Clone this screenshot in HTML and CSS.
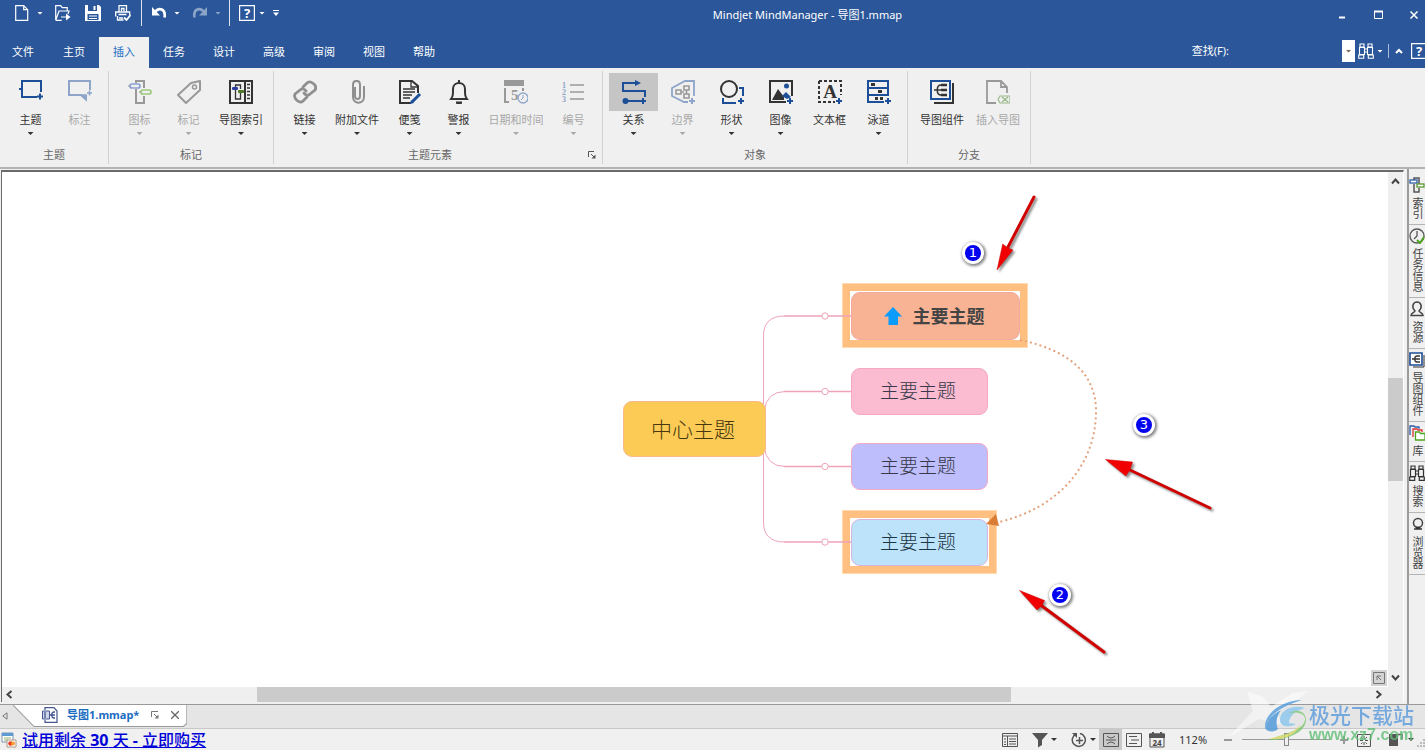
FILE: index.html
```html
<!DOCTYPE html>
<html lang="zh-CN">
<head>
<meta charset="utf-8">
<title>Mindjet MindManager - 导图1.mmap</title>
<link rel="stylesheet" href="styles.css">
</head>
<body>
<header class="header">
  <div class="titlebar">
    <div class="quick">
      <button class="qbtn" aria-label="新建"><svg viewBox="0 0 16 16"><path d="M1.700 .7h8l4 4v10.600h-12zM9.700 .7v4h4" fill="none" stroke="#fff" stroke-width="1.200"/></svg></button>
      <button class="drop g7" aria-label="新建选项"></button>
      <button class="qbtn g12" aria-label="打开"><svg viewBox="0 0 16 16"><path d="M.7 15.300V.7h5l1.500 2h5v3M.7 15.300 4 6h10l-1 3M.7 15.300h6M6 12h6" fill="none" stroke="#fff" stroke-width="1.200"/><path d="M11 8.500 15.500 12 11 15.500z" fill="#fff"/></svg></button>
      <button class="qbtn g14" aria-label="保存"><svg viewBox="0 0 16 16"><path d="M0 0h14l2 2v14H0z" fill="#fff"/><path d="M3 0h9v6H3zM2.500 9h11v6h-11z" fill="#2b579a"/><path d="M8.500 1h2v4h-2zM4 10.500h8v1H4zM4 13h8v1H4z" fill="#fff"/></svg></button>
      <button class="qbtn g14" aria-label="打印"><svg viewBox="0 0 16 16"><path d="M4 6.500V.7h7.500v5.800M.7 11.500V7h14v3M2.500 11v4h6M4 13h4M6.500 6V3.500h2.500v2.500M3.500 9.500h8" fill="none" stroke="#fff" stroke-width="1.300"/><path d="m9 12.500 2.500 2.500 4-5" fill="none" stroke="#fff" stroke-width="1.800"/></svg></button>
      <span class="qsep g10"></span>
      <button class="qbtn g9" aria-label="撤消"><svg viewBox="0 0 16 16"><path d="M3.500 7.500C8 1.500 15 4 13.500 12.500" fill="none" stroke="#fff" stroke-width="2.600"/><path d="M1 2v8.500h8z" fill="#fff"/></svg></button>
      <button class="drop g7" aria-label="撤消选项"></button>
      <button class="qbtn g12 faded" aria-label="重做"><svg viewBox="0 0 16 16"><path d="M12.500 7.500C8 1.500 1 4 2.500 12.500" fill="none" stroke="#fff" stroke-width="2.600"/><path d="M15 2v8.500H7z" fill="#fff"/></svg></button>
      <button class="drop g7 faded" aria-label="重做选项"></button>
      <span class="qsep g8"></span>
      <button class="qbtn g9" aria-label="帮助"><svg viewBox="0 0 16 16"><path d="M.6.6h14.800v14.800H.6z" fill="none" stroke="#fff" stroke-width="1.200"/><text x="8" y="12.500" class="q-mark">?</text></svg></button>
      <button class="drop g4" aria-label="帮助选项"></button>
      <button class="custom g8" aria-label="自定义"><svg viewBox="0 0 6 6"><path d="M0 .5h6" stroke="#fff"/><path d="M0 2.500h6L3 6z" fill="#fff"/></svg></button>
    </div>
    <h1 class="title">Mindjet MindManager - 导图1.mmap</h1>
    <div class="winbtns">
      <button aria-label="最小化"><svg viewBox="0 0 12 12"><path d="M3 8.500h6" stroke="#fff" stroke-width="2"/></svg></button>
      <button aria-label="最大化"><svg viewBox="0 0 12 12"><path d="M2.500 2.500h8v7h-8z" fill="none" stroke="#fff"/><path d="M2 2.500h9" stroke="#fff" stroke-width="2"/></svg></button>
      <button aria-label="关闭"><svg viewBox="0 0 12 12"><path d="m2.500 2.500 7 7m0-7-7 7" stroke="#fff" stroke-width="1.500"/></svg></button>
    </div>
  </div>
  <div class="menubar">
    <nav class="menu">
      <button>文件</button><button>主页</button><button class="active">插入</button><button>任务</button><button>设计</button><button>高级</button><button>审阅</button><button>视图</button><button>帮助</button>
    </nav>
    <div class="find">
      <label for="find">查找(F):</label>
      <input id="find" type="text">
      <button class="find-drop" aria-label="查找历史"><span class="drop brown"></span></button>
      <button class="qbtn g3" aria-label="查找"><svg viewBox="0 0 16 16"><path d="M2 1h4v3H2zM10 1h4v3h-4zM1.500 4.500h5v7h-5zM9.500 4.500h5v7h-5zM.7 12h5v3.300h-5zM10.300 12h5v3.300h-5zM6.500 6h3M6.500 9h3" fill="none" stroke="#fff" stroke-width="1.100"/></svg></button>
      <button class="drop g3" aria-label="查找选项"></button>
      <span class="fsep"></span>
      <button class="collapse" aria-label="折叠功能区"><svg viewBox="0 0 8 6"><path d="m1 5 3-3 3 3" fill="none" stroke="#fff" stroke-width="2"/></svg></button>
      <button class="qbtn" aria-label="帮助"><svg viewBox="0 0 16 16"><path d="M.6.6h14.800v14.800H.6z" fill="none" stroke="#fff" stroke-width="1.200"/><text x="8" y="12.500" class="q-mark">?</text></svg></button>
    </div>
  </div>
</header>

<section class="ribbon" aria-label="插入">
  <div class="group">
    <div class="tools">
      <button class="tool"><span class="pic"><svg viewBox="0 0 24 24"><path d="M18 17H3V1h19v11M0 9h3" fill="none" stroke="#1d4e98" stroke-width="2"/><path d="M18 16.500h6M21 13.500v6" stroke="#1d4e98" stroke-width="2"/></svg></span><span>主题</span><i class="caret"></i></button>
      <button class="tool off"><span class="pic"><svg viewBox="0 0 24 24"><path d="M22 10V1H1v14h12l5 4v-4" fill="none" stroke="#8ea5c9" stroke-width="2"/><path d="M13 15h5v5zM19 13h5M21.500 10.500v5" fill="#8ea5c9" stroke="#8ea5c9" stroke-width="1.500"/></svg></span><span>标注</span></button>
    </div>
    <div class="gname">主题</div>
  </div>
  <div class="group">
    <div class="tools">
      <button class="tool off"><span class="pic"><svg viewBox="0 0 24 24"><path d="M8 3V1h8v7M8 9v14h8v-7" fill="none" stroke="#999" stroke-width="2"/><rect x="2" y="4" width="10" height="4" rx="2" fill="#f0f0f0" stroke="#8a9fd0" stroke-width="1.700"/><rect x="13" y="10" width="10" height="4" rx="2" fill="#f0f0f0" stroke="#9cc97c" stroke-width="1.700"/><path d="M0 6h2M11 12h2" stroke="#999"/></svg></span><span>图标</span><i class="caret"></i></button>
      <button class="tool off"><span class="pic"><svg viewBox="0 0 24 24"><path d="m1 15 13-12 9-2v9L9 23z" fill="none" stroke="#999" stroke-width="2" stroke-linejoin="round"/><circle cx="17.500" cy="7" r="2" fill="none" stroke="#999" stroke-width="1.500"/></svg></span><span>标记</span><i class="caret"></i></button>
      <button class="tool wide"><span class="pic"><svg viewBox="0 0 24 24"><path d="M1 1h22v22H1zM16 1v22" fill="none" stroke="#333" stroke-width="2"/><path d="M6.500 7V5h5v4M6.500 10v9h5v-6" fill="none" stroke="#333" stroke-width="1.300"/><rect x="3" y="7" width="6" height="3" rx="1" fill="#2c3f9e"/><rect x="9" y="10" width="6" height="3" rx="1" fill="#4e7a27"/><path d="M18 4.500h3M18 8h3M18 11.500h3M18 15h3M18 18.500h3" stroke="#333" stroke-width="1.500"/></svg></span><span>导图索引</span><i class="caret"></i></button>
    </div>
    <div class="gname">标记</div>
  </div>
  <div class="group">
    <div class="tools">
      <button class="tool"><span class="pic"><svg viewBox="0 0 24 24"><g fill="none" stroke="#8f8f8f" stroke-width="2.800" stroke-linecap="round"><path d="m10 7 4-4c3-3 11 2 8 7l-5 4c-2 2-5 1-6-1"/><path d="m14 17-4 4c-3 3-10-2-8-7l5-4c2-2 5-1 6 1"/></g></svg></span><span>链接</span><i class="caret"></i></button>
      <button class="tool wide"><span class="pic"><svg viewBox="0 0 24 24"><path d="M10 7v9c0 4 5 4 5 0V5c0-5.500-7-5.500-7 0v12c0 7.500 11 7.500 11 0V6" fill="none" stroke="#8f8f8f" stroke-width="2"/></svg></span><span>附加文件</span><i class="caret"></i></button>
      <button class="tool"><span class="pic"><svg viewBox="0 0 24 24"><path d="M13 23H2V1h12l6 5v7" fill="none" stroke="#333" stroke-width="2"/><path d="M13 1v6h7M5 9h12M5 12h12M5 15h9M5 18h7" fill="none" stroke="#333" stroke-width="1.300"/><path d="m22 14-8 8" stroke="#1d4e98" stroke-width="3"/><path d="m13 20-1 4 4-1z" fill="#1d4e98"/></svg></span><span>便笺</span><i class="caret"></i></button>
      <button class="tool"><span class="pic"><svg viewBox="0 0 24 24"><path d="M4 19c2-3 2-4 2-10 0-8 12-8 12 0 0 6 0 7 2 10z" fill="none" stroke="#333" stroke-width="2"/><path d="M9 21.500h6v2c-1 1-5 1-6 0zM11 0h2v3h-2z" fill="#333"/></svg></span><span>警报</span><i class="caret"></i></button>
      <button class="tool date off"><span class="pic"><svg viewBox="0 0 24 24"><path d="M0 0h20v6H0z" fill="#999"/><path d="M1 8v14h4M19 8v3" fill="none" stroke="#999" stroke-width="2"/><text x="7" y="20" class="five">5</text><circle cx="19" cy="18" r="5" fill="#f0f0f0" stroke="#8ea5c9" stroke-width="1.300"/><path d="M19 15v3l-2 2" fill="none" stroke="#8ea5c9"/></svg></span><span>日期和时间</span><i class="caret"></i></button>
      <button class="tool off"><span class="pic"><svg viewBox="0 0 24 24"><path d="M8 5h14M8 12h14M8 19h14" stroke="#999" stroke-width="1.700"/><g class="digits"><text x="2" y="8">1</text><text x="2" y="15">2</text><text x="2" y="22">3</text></g></svg></span><span>编号</span><i class="caret"></i></button>
    </div>
    <div class="gname has-launcher">主题元素<button class="launcher" aria-label="主题元素选项"><svg viewBox="0 0 8 8"><path d="M.5 6V.5H6M3 3l3 3" fill="none" stroke="#555"/><path d="M7.500 3.500v4h-4z" fill="#555"/></svg></button></div>
  </div>
  <div class="group">
    <div class="tools">
      <button class="tool on"><span class="pic"><svg viewBox="0 0 24 24"><path d="M15 3H1v8h22v6M4 21h14" fill="none" stroke="#1d4e98" stroke-width="2"/><path d="m13 0 6 3-6 3z" fill="#1d4e98"/><circle cx="3.500" cy="21" r="3" fill="#1d4e98"/><path d="M18 21h6M21 18v6" stroke="#1d4e98" stroke-width="2"/></svg></span><span>关系</span><i class="caret"></i></button>
      <button class="tool off"><span class="pic"><svg viewBox="0 0 24 24"><path d="M23 16V1h-9L1 8v8l12 6h4" fill="none" stroke="#8ea5c9" stroke-width="1.800"/><path d="M5 10h5v4H5zM13 6h5v4h-5zM13 14h5v4h-5zM10 12h3M15.500 10v4" fill="none" stroke="#999" stroke-width="1.600"/><path d="M18 21h6M21 18v6" stroke="#8ea5c9" stroke-width="2"/></svg></span><span>边界</span><i class="caret"></i></button>
      <button class="tool"><span class="pic"><svg viewBox="0 0 24 24"><circle cx="9" cy="9" r="8" fill="none" stroke="#333" stroke-width="2"/><path d="M19 8h4v8M3 18v5h13M18 21h6M21 18v6" fill="none" stroke="#1d4e98" stroke-width="2"/></svg></span><span>形状</span><i class="caret"></i></button>
      <button class="tool"><span class="pic"><svg viewBox="0 0 24 24"><path d="M17 22H1V1h22v15" fill="none" stroke="#333" stroke-width="2"/><path d="m3 20 6-11 6 8v3z" fill="#333"/><path d="m13 16 4-4 5 5-4 2z" fill="#1d4e98"/><circle cx="17.500" cy="6" r="2.500" fill="#1d4e98"/><path d="M18 21h6M21 18v6" stroke="#1d4e98" stroke-width="2"/></svg></span><span>图像</span><i class="caret"></i></button>
      <button class="tool"><span class="pic"><svg viewBox="0 0 24 24"><path d="M1 1h22v14M1 1v21h16" fill="none" stroke="#333" stroke-width="2" stroke-dasharray="3 2"/><text x="12" y="18" class="big-a">A</text><path d="M18 21h6M21 18v6" stroke="#1d4e98" stroke-width="2"/></svg></span><span>文本框</span></button>
      <button class="tool"><span class="pic"><svg viewBox="0 0 24 24"><path d="M17 22H1V1h20v15M1 8h20M1 15h20" fill="none" stroke="#1d4e98" stroke-width="2"/><path d="M4 3h4v3H4zM11 10h4v3h-4zM8 17h3v3H8zM13 17h3v3h-3z" fill="#333"/><path d="M18 21h6M21 18v6" stroke="#1d4e98" stroke-width="2"/></svg></span><span>泳道</span><i class="caret"></i></button>
    </div>
    <div class="gname">对象</div>
  </div>
  <div class="group">
    <div class="tools">
      <button class="tool wide"><span class="pic"><svg viewBox="0 0 24 24"><path d="M23 3v20H4" fill="none" stroke="#333" stroke-width="2"/><path d="M1 1h19v18H1z" fill="#f0f0f0" stroke="#1d4e98" stroke-width="2"/><path d="M11 5c-5 0-5 10 0 10M4 10h8" fill="none" stroke="#333" stroke-width="1.500"/><path d="M11 5h6M11 10h6M11 15h6" stroke="#333" stroke-width="2.500"/></svg></span><span>导图组件</span></button>
      <button class="tool wide off"><span class="pic"><svg viewBox="0 0 24 24"><path d="M10 23H1V1h14l6 6v6M15 1v6h6" fill="none" stroke="#999" stroke-width="1.800"/><path d="M14 16h10v7H14l-2-3.500zM16 17l6 5M22 17l-6 5" fill="none" stroke="#9bb98a" stroke-width="1.200"/></svg></span><span>插入导图</span></button>
    </div>
    <div class="gname">分支</div>
  </div>
</section>

<main class="work">
  <div class="doc">
    <div class="doc-row">
      <div class="canvas">
        <div class="frame f1"></div>
        <div class="frame f4"></div>
        <svg class="layer" viewBox="2 172 1386 515" width="1386" height="515">
          <g fill="none" stroke="#eda3b8">
            <path d="M763.500 405v-69q0-20 21-20M763.500 453v69q0 20 21 20"/>
            <path d="M764 411q3-19.500 21-19.500M764 447q3 19.500 21 19.500"/>
            <path d="M784 316h67M784 391.500h67M784 466.500h67M784 542h67" stroke-width="1.600"/>
          </g>
          <g fill="#fff" stroke="#eda3b8"><circle cx="825" cy="316" r="3.200"/><circle cx="825" cy="391.500" r="3.200"/><circle cx="825" cy="466.500" r="3.200"/><circle cx="825" cy="542" r="3.200"/></g>
        </svg>
        <div class="node center">中心主题</div>
        <div class="node n1"><svg viewBox="0 0 18 18"><path d="M9 0 18 9.500h-4V18H4.500V9.500H0z" fill="#0a9bfb"/></svg>主要主题</div>
        <div class="node n2">主要主题</div>
        <div class="node n3">主要主题</div>
        <div class="node n4">主要主题</div>
        <svg class="layer" viewBox="2 172 1386 515" width="1386" height="515">
          <path d="M1020 340C1068 350 1096 373 1096 411 1096 462 1062 507 999 522" fill="none" stroke="#e3a27c" stroke-width="2" stroke-dasharray="2 3"/>
          <path d="m986 524 10-10 3 12z" fill="#d97c35"/>
          <g class="arrows" fill="#f00000" stroke="#d00000">
            <path d="m1034 197-27 52M1210 508l-80-38M1104 652l-62-46" stroke-width="3" stroke-linecap="round"/>
            <path d="m997 270 5.700-26 5 4 5.300 2zM1105.500 459.500l27 2.500-2.700 8-4 6zM1019.500 590.500l25 10-3 5.500-4.500 4z" stroke-width=".5"/>
          </g>
        </svg>
        <span class="mark m1">1</span>
        <span class="mark m2">2</span>
        <span class="mark m3">3</span>
        <button class="corner" aria-label="全景"><svg viewBox="0 0 16 16"><path d="M2.500 2.500h11v11h-11zM6 10V6h4M6 6l4 4" fill="none" stroke="#777"/></svg></button>
      </div>
      <div class="vbar">
        <button aria-label="向上"><svg viewBox="0 0 9 9"><path d="m1 6.500 3.500-4 3.500 4" fill="none" stroke="#444" stroke-width="2"/></svg></button>
        <div class="vtrack"><div class="vthumb"></div></div>
        <button aria-label="向下"><svg viewBox="0 0 9 9"><path d="m1 2.500 3.500 4 3.500-4" fill="none" stroke="#444" stroke-width="2"/></svg></button>
      </div>
    </div>
    <div class="hbar">
      <button aria-label="向左"><svg viewBox="0 0 9 9"><path d="m6.500 1-4 3.500 4 3.500" fill="none" stroke="#444" stroke-width="2"/></svg></button>
      <div class="htrack"><div class="hthumb"></div></div>
      <button aria-label="向右"><svg viewBox="0 0 9 9"><path d="m2.500 1 4 3.500-4 3.500" fill="none" stroke="#444" stroke-width="2"/></svg></button>
    </div>
  </div>
  <aside class="side">
    <button><svg viewBox="0 0 16 16"><path d="M5 3V1h5v6M5 7v8h5v-4" fill="none" stroke="#555" stroke-width="1.500"/><rect x="1" y="3" width="7" height="3" fill="#fff" stroke="#2c5fa8" stroke-width="1.300"/><rect x="8" y="7" width="7" height="3" fill="#fff" stroke="#5a9a30" stroke-width="1.300"/></svg><span>索引</span></button>
    <button><svg viewBox="0 0 16 16"><circle cx="8" cy="8" r="7" fill="none" stroke="#555" stroke-width="1.300"/><path d="M8 3v5l-3 3" fill="none" stroke="#555" stroke-width="1.300"/><path d="m8 12 3 3 4-6" fill="none" stroke="#4fa51f" stroke-width="2"/></svg><span>任务信息</span></button>
    <button><svg viewBox="0 0 16 16"><path d="M2 14.500c0-3 4-3 4-4.500C2 6 4 1 8 1s6 5 2 9c0 1.500 4 1.500 4 4.500z" fill="none" stroke="#444" stroke-width="1.500"/></svg><span>资源</span></button>
    <button><svg viewBox="0 0 16 16"><path d="M15 3v12H4" fill="none" stroke="#333"/><path d="M1 1h12v12H1z" fill="#fff" stroke="#1d4e98" stroke-width="1.600"/><path d="M11 4H8C5 4 5 10 8 10h3M3 7h8" fill="none" stroke="#333" stroke-width="1.300"/></svg><span>导图组件</span></button>
    <button><svg viewBox="0 0 16 16"><path d="M1 10V1h4l1 1h4v2" fill="none" stroke="#2c5fa8" stroke-width="1.300"/><path d="M4 12V4h4l1 1h4v2" fill="none" stroke="#d33" stroke-width="1.300"/><path d="M6.500 15V7h4l1 1.500H16V15z" fill="#fff" stroke="#4fa51f" stroke-width="1.300"/></svg><span>库</span></button>
    <button><svg viewBox="0 0 16 16"><path d="M2 1h4v3H2zM10 1h4v3h-4zM1.500 4.500h5v7h-5zM9.500 4.500h5v7h-5zM.7 12h5v3.300h-5zM10.300 12h5v3.300h-5zM6.500 6h3M6.500 9h3" fill="none" stroke="#333" stroke-width="1.200"/></svg><span>搜索</span></button>
    <button><svg viewBox="0 0 16 16"><circle cx="9" cy="7" r="4.500" fill="none" stroke="#444" stroke-width="1.500"/><path d="M5 13h8M7 11.500h4" stroke="#333" stroke-width="1.600"/></svg><span>浏览器</span></button>
  </aside>
</main>

<footer class="bottom">
  <div class="tabs">
    <button class="prev" aria-label="上一个"><svg viewBox="0 0 6 8"><path d="M5 .8v6.400L.8 4z" fill="none" stroke="#777"/></svg></button>
    <div class="tab">
      <svg class="tab-shape" viewBox="0 0 174 22" preserveAspectRatio="none"><path d="M0 0 21 21.500H170l3.500-3V0z" fill="#fff"/><path d="M0 0 21 21.500H170l3.500-3V0" fill="none" stroke="#999"/></svg>
      <svg class="tab-doc" viewBox="0 0 16 16"><path d="M3 3V.7h9L15 4v11.300H3V13" fill="none" stroke="#44558f" stroke-width="1.200"/><path d="M.5 4h7v8h-7z" fill="#cfd6ea" stroke="#44558f"/><path d="M3 5v6M8 8h5M13 5h-1c-3 0-3 6 0 6h1" fill="none" stroke="#44558f" stroke-width="1.300"/></svg>
      <a class="tab-name" href="#">导图1.mmap*</a>
      <button aria-label="浮动"><svg viewBox="0 0 8 8"><path d="M.5 6V.5H7M3 3l3 3" fill="none" stroke="#777"/><path d="M7.500 3.500v4h-4z" fill="#777"/></svg></button>
      <button aria-label="关闭标签"><svg viewBox="0 0 8 8"><path d="m0 0 8 8M8 0 0 8" stroke="#666" stroke-width="1.300"/></svg></button>
    </div>
  </div>
  <div class="status">
    <svg class="trial-ico" viewBox="0 0 16 16"><path d="M1 1h11v9H1z" fill="#fff" stroke="#7d93ad"/><path d="M1 1h11v3H1z" fill="#5e9bd3"/><path d="M3 6h7M3 8h4" stroke="#93b26b"/><path d="M6 8h9v7H6z" fill="#fff" stroke="#a98"/><circle cx="9.500" cy="11.500" r="2.300" fill="#e53b20"/><circle cx="12" cy="11.500" r="2" fill="#f79a2c"/></svg>
    <a class="trial" href="#">试用剩余 <b>30</b> 天 <b>-</b> 立即购买</a>
    <div class="views">
      <button class="sbtn" aria-label="大纲"><svg viewBox="0 0 16 16"><path d="M.5 1.500h15v13H.5zM1 4h14M5.500 4v10M2 7h2M2 10h2M2 12.500h2M7 7h7M7 9.500h7M7 12h7" fill="none" stroke="#555"/></svg></button>
      <button class="sbtn filter" aria-label="筛选"><svg viewBox="0 0 16 16"><path d="M0 1h16l-6 7v5l-4 2.500V8z" fill="#555"/></svg></button>
      <button class="drop dark g3" aria-label="筛选选项"></button>
      <button class="sbtn g14" aria-label="展开"><svg viewBox="0 0 16 16"><path d="M5 2a6.500 6.500 0 1 0 4-.5M8.500 5v7M5 8.500h7" fill="none" stroke="#555" stroke-width="1.500"/><path d="M1 1h5v5z" fill="#555"/></svg></button>
      <button class="drop dark g3" aria-label="展开选项"></button>
      <button class="sview on" aria-label="导图视图"><svg viewBox="0 0 16 16"><path d="M.5 1.500h15v13H.5zM3 8h10M4 4q4 4 8 0M4 12q4-4 8 0" fill="none" stroke="#555"/></svg></button>
      <button class="sview" aria-label="大纲视图"><svg viewBox="0 0 16 16"><path d="M.5 1.500h15v13H.5zM3 4.500h8M5 8h8M3 11.500h8" fill="none" stroke="#555"/></svg></button>
      <button class="sview" aria-label="日程视图"><svg viewBox="0 0 16 16"><path d="M1 2h14v13H1z" fill="none" stroke="#555"/><path d="M0 1.500h16V6H0zM3 0h2v2H3zM11 0h2v2h-2z" fill="#555"/><text x="8" y="14" class="cal">24</text></svg></button>
      <output class="zoom">112%</output>
      <button class="step" aria-label="缩小"><svg viewBox="0 0 10 10"><path d="M1 5h8" stroke="#999" stroke-width="2"/></svg></button>
      <input class="slider" type="range" min="0" max="100" value="51" aria-label="缩放">
      <button class="step" aria-label="放大"><svg viewBox="0 0 10 10"><path d="M1 5h8M5 1v8" stroke="#999" stroke-width="2"/></svg></button>
      <button class="sbtn fit" aria-label="适合窗口"><svg viewBox="0 0 16 16"><path d="M1.500 2.500h13v12h-13zM8 4v3M8 10v3M4 8.500h3M9 8.500h3M5 5l1.500 1.500M11 5 9.500 6.500M5 12l1.500-1.500M11 12l-1.500-1.500" fill="none" stroke="#555"/></svg></button>
      <button class="sbtn pane" aria-label="任务窗格"><svg viewBox="0 0 16 16"><path d="M1 2h9v12H1z" fill="#555"/><path d="M10 2.500h4v5" fill="none" stroke="#555" stroke-width="1.300"/></svg></button>
      <button class="drop dark g4" aria-label="窗格选项"></button>
      <svg class="grip" viewBox="0 0 8 8"><path d="M6 0h2v2H6zM3 3h2v2H3zM6 3h2v2H6zM0 6h2v2H0zM3 6h2v2H3zM6 6h2v2H6z" fill="#bbb"/></svg>
    </div>
  </div>
</footer>

<div class="brand" aria-hidden="true">
  <svg viewBox="0 0 80 52"><path d="M18 0 34 6 42 16 64 2 80 0 48 22 54 34 30 28 0 46 24 20z" fill="#fff" opacity=".65"/><path d="M73 9C54 9 35 22 36 37c4-14 18-22 37-28z" fill="#559fdf"/><path d="M36 37c2-8 8-14 16-18-4 6-6 12-3 19-5 4-11 3-13-1z" fill="#4a97da"/><path d="M76 17c-12-4-25 2-25 12 0 7 9 8 16 4l-7-1c0-7 6-12 16-15z" fill="#89c6ee"/><path d="M60 22c10-2 17 1 16 7-2 11-20 13-36 20 6 1 36-3 37-20 0-9-9-11-17-7z" fill="#79c56d"/><path d="M72 33c-8 11-20 11-32 15 10 1 26-1 32-15z" fill="#d6d85f"/></svg>
  <div class="brand-text"><b>极光下载站</b><span>www.xz7.com</span></div>
</div>
</body>
</html>
```
FILE: styles.css
```css
* { box-sizing: border-box; }
html, body { height: 100%; }
body {
  margin: 0;
  display: flex;
  flex-direction: column;
  position: relative;
  overflow: hidden;
  background: #f0f0f0;
  color: #333;
  font: 11px/16px "Noto Sans", "Noto Sans CJK SC", sans-serif;
}
button {
  margin: 0;
  padding: 0;
  border: 0;
  background: none;
  color: inherit;
  font: inherit;
}
svg { display: block; }

.header {
  flex: none;
  height: 68px;
  overflow: hidden;
  background: #2b579a;
  color: #fff;
}
.titlebar { display: flex; height: 30px; align-items: center; }
.quick { display: flex; align-items: center; height: 26px; padding-left: 14px; align-self: flex-start; }
.qbtn { flex: none; width: 16px; height: 16px; }
.qbtn svg { width: 16px; height: 16px; }
.drop {
  flex: none;
  width: 6px;
  height: 3px;
  background: #fff;
  clip-path: polygon(0 0, 100% 0, 50% 100%);
}
.drop.dark { background: #333; }
.drop.brown { background: #7b6656; }
.faded { opacity: .45; }
.qsep { width: 1px; height: 26px; background: #dfe6f0; }
.custom { width: 6px; }
.g3 { margin-left: 3px; }
.g4 { margin-left: 4px; }
.g7 { margin-left: 7px; }
.g8 { margin-left: 8px; }
.g9 { margin-left: 9px; }
.g10 { margin-left: 10px; }
.g12 { margin-left: 12px; }
.g14 { margin-left: 14px; }
.q-mark { font: bold 13px "Noto Sans", sans-serif; fill: #fff; text-anchor: middle; }
.title { flex: 1; margin: 0; font-size: 11px; font-weight: 400; text-align: center; }
.winbtns { display: flex; gap: 24px; padding-right: 5px; }
.winbtns button, .winbtns svg { width: 12px; height: 12px; }

.menubar { display: flex; height: 38px; align-items: flex-end; justify-content: space-between; }
.menu { display: flex; }
.menu button { width: 50px; height: 31px; padding-bottom: 2px; }
.menu button:first-child { width: 49px; padding-right: 3px; }
.menu .active { background: #f0f0f0; color: #1a6fc4; }
.find { display: flex; align-items: center; height: 34px; margin-right: -2px; }
.find input {
  width: 108px;
  height: 22px;
  margin-left: 5px;
  border: 0;
  background: #2b579a;
  color: #fff;
  font: inherit;
}
.find-drop { display: flex; align-items: center; justify-content: center; width: 13px; height: 22px; background: #fff; }
.fsep { width: 1px; height: 14px; margin: 0 6px 0 5px; background: #a9bcd9; }
.collapse { width: 8px; height: 6px; margin-right: 8px; }

.ribbon {
  flex: none;
  display: flex;
  height: 101px;
  padding-top: 3px;
  border-bottom: 2px solid #b4b4b4;
}
.group {
  height: 93px;
  padding: 2px 4px 0 6px;
  border-right: 1px solid #d2d2d2;
}
.tools { display: flex; height: 74px; }
.tool { display: flex; flex-direction: column; align-items: center; width: 49px; white-space: nowrap; }
.tool.wide { width: 56px; }
.tool.date { width: 66px; }
.tool.off { color: #a8a8a8; }
.pic { display: flex; align-items: center; justify-content: center; width: 100%; height: 38px; margin-bottom: 1px; }
.pic svg { width: 24px; height: 24px; }
.tool.on .pic { background: #c5c5c5; }
.caret { width: 6px; height: 3px; margin-top: 4px; background: currentColor; clip-path: polygon(0 0, 100% 0, 50% 100%); }
.gname { position: relative; padding-right: 2px; color: #666; text-align: center; }
.gname.has-launcher { padding-right: 18px; }
.launcher { position: absolute; right: 2px; bottom: 4px; width: 8px; height: 8px; }
.five { font: bold 15px "Liberation Serif", serif; fill: #999; }
.digits { font: bold 8px "Liberation Serif", serif; fill: #8ea5c9; text-anchor: middle; }
.big-a { font: bold 19px "Liberation Serif", serif; fill: #333; text-anchor: middle; }

.work { flex: 1; display: flex; min-height: 0; }
.doc {
  flex: 1;
  display: flex;
  flex-direction: column;
  min-width: 0;
  margin: 1px 3px 2px 1px;
  border-top: 2px solid #6a6a6a;
  border-left: 1px solid #6a6a6a;
  border-right: 1px solid #fff;
}
.doc-row { flex: 1; display: flex; min-height: 0; }
.canvas { position: relative; flex: 1; overflow: hidden; background: #fff; }
.layer { position: absolute; left: 0; top: 0; }
.vbar, .hbar { display: flex; align-items: center; background: #efefef; }
.vbar { flex-direction: column; width: 15px; padding: 5px 0; }
.hbar { height: 15px; padding: 0 20px 0 3px; }
.vbar button, .hbar button, .vbar svg, .hbar svg { width: 9px; height: 9px; }
.vtrack { flex: 1; width: 15px; padding-top: 192px; }
.vthumb { height: 103px; background: #cbcbcb; }
.htrack { flex: 1; height: 15px; padding: 0 363px 0 243px; }
.hthumb { height: 15px; background: #cbcbcb; }

.node {
  position: absolute;
  display: flex;
  align-items: center;
  justify-content: center;
  width: 137px;
  height: 47px;
  padding: 0 3px 1px 0;
  border: 1px solid #f3a8c4;
  border-radius: 9px;
  color: #38384a;
  font-size: 19px;
  font-weight: 300;
}
.center { left: 621px; top: 229px; width: 143px; height: 56px; border-color: #f6b98c; background: #fbcb55; color: #49380f; font-size: 21px; }
.n1 { left: 849px; top: 120px; width: 169px; height: 48px; gap: 11px; border-color: #f2a99f; background: #f8b395; color: #444; font-size: 18px; font-weight: 700; }
.n1 svg { width: 18px; height: 18px; }
.n2 { left: 849px; top: 196px; background: #fbbbd0; }
.n3 { left: 849px; top: 271px; background: #bdbefb; }
.n4 { left: 849px; top: 347px; border-color: #d8b3dc; background: #bde3fb; color: #1c3644; }
.frame { position: absolute; border: 8px solid #ffbf80; outline: 1px solid #ffd9b0; outline-offset: -1px; }
.f1 { left: 840px; top: 111px; width: 186px; height: 65px; }
.f4 { left: 840px; top: 338px; width: 155px; height: 64px; }
.arrows { filter: drop-shadow(2px 2px 1px rgba(0, 0, 0, .45)); }
.mark {
  position: absolute;
  width: 22px;
  height: 22px;
  border: 3px solid #fff;
  border-radius: 50%;
  background: #0303f0;
  box-shadow: 1px 1px 3px 1px rgba(0, 0, 0, .5);
  color: #fff;
  font: 13px/16px "DejaVu Sans", sans-serif;
  text-align: center;
}
.m1 { left: 960px; top: 70px; }
.m2 { left: 1047px; top: 412px; }
.m3 { left: 1131px; top: 242px; }
.corner { position: absolute; right: 1px; bottom: 1px; width: 16px; height: 16px; background: #d4d4d4; }

.side {
  flex: none;
  width: 18px;
  padding-top: 5px;
  overflow: hidden;
  border-left: 2px solid #9c9c9c;
}
.side button {
  display: flex;
  flex-direction: column;
  align-items: center;
  gap: 4px;
  width: 16px;
  padding: 3px 0 5px;
  border-bottom: 1px solid #b5b5b5;
  color: #444;
}
.side svg { width: 16px; height: 16px; }
.side span { writing-mode: vertical-rl; line-height: 16px; }

.bottom { flex: none; }
.tabs { display: flex; height: 25px; align-items: flex-start; border-top: 1px solid #999; border-bottom: 1px solid #c8c8c8; background: #e5e5e5; }
.prev { width: 13px; height: 22px; padding-left: 2px; }
.prev svg { width: 6px; height: 8px; }
.tab { position: relative; display: flex; align-items: center; height: 22px; padding: 0 8px 2px 29px; }
.tab-shape { position: absolute; left: 0; top: 0; width: 100%; height: 22px; }
.tab-doc { position: relative; width: 16px; height: 16px; margin-right: 9px; }
.tab-name { position: relative; color: #1b6cc0; font-weight: 700; text-decoration: none; }
.tab button { position: relative; width: 8px; height: 8px; margin-left: 12px; }
.status { display: flex; align-items: center; height: 21px; padding-left: 1px; overflow: hidden; }
.trial-ico { width: 16px; height: 16px; margin-right: 5px; }
.trial { color: #0000d8; font-size: 16px; font-weight: 500; line-height: 20px; }
.views { display: flex; align-items: center; height: 22px; margin-left: auto; }
.sbtn, .sbtn svg { width: 16px; height: 16px; }
.filter { margin-left: 14px; }
.sview { display: flex; align-items: center; justify-content: center; width: 23px; height: 22px; }
.sview svg { width: 16px; height: 16px; }
.drop + .sview { margin-left: 3px; }
.sview.on { background: #c9c9c9; }
.cal { font: bold 8px "Noto Sans", sans-serif; fill: #444; text-anchor: middle; }
.zoom { width: 42px; padding-left: 11px; margin-right: 13px; }
.step, .step svg { width: 10px; height: 10px; }
.slider {
  appearance: none;
  width: 88px;
  height: 16px;
  margin: 0 9px;
  background: linear-gradient(#999, #999) center / 100% 1px no-repeat;
}
.slider::-webkit-slider-thumb { appearance: none; width: 5px; height: 13px; border: 1px solid #888; background: #f0f0f0; }
.fit { margin-left: 7px; }
.pane { margin-left: 16px; }
.grip { width: 8px; height: 8px; margin: 6px 0 0 3px; }

.brand { position: absolute; right: 9px; bottom: 7px; display: flex; align-items: flex-end; pointer-events: none; opacity: .8; }
.brand svg { width: 80px; height: 52px; }
.brand-text { display: flex; flex-direction: column; width: 107px; color: #5a9bdc; white-space: nowrap; }
.brand-text b { font: 500 21px/26px "Noto Sans CJK SC", sans-serif; }
.brand-text span { color: #62bf77; font: bold 16px/16px "Liberation Sans", sans-serif; }
```
